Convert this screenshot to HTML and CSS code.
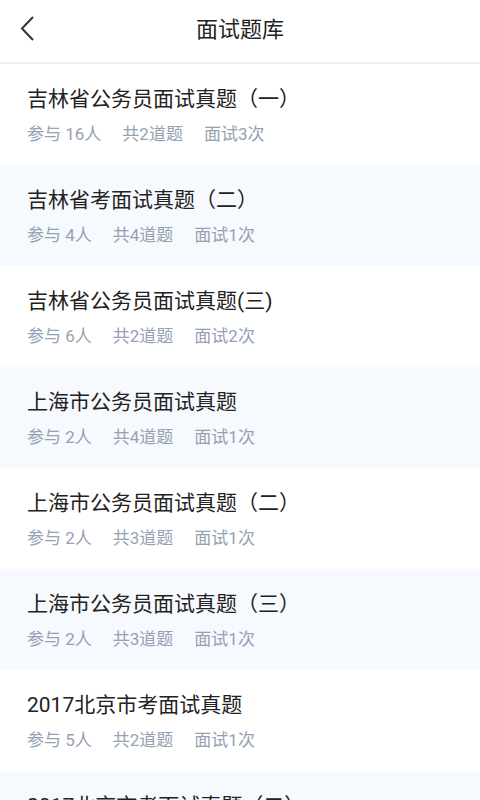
FILE: index.html
```html
<!DOCTYPE html>
<html lang="zh-CN">
<head>
    <meta charset="UTF-8">
    <meta name="viewport" content="width=device-width, initial-scale=1.0">
    <title>面试题库</title>
    <link rel="stylesheet" href="styles.css">
</head>
<body>
    <div class="header">
        <div class="back">
            <svg width="16" height="26" viewBox="0 0 16 26">
                <path d="M13 1 L2 12.5 L13 24" fill="none" stroke="#333" stroke-width="2"/>
            </svg>
        </div>
        <h1>面试题库</h1>
    </div>
    <div class="list">
        <div class="item">
            <div class="title">吉林省公务员面试真题（一）</div>
            <div class="meta"><span>参与 16人</span><span>共2道题</span><span>面试3次</span></div>
        </div>
        <div class="item">
            <div class="title">吉林省考面试真题（二）</div>
            <div class="meta"><span>参与 4人</span><span>共4道题</span><span>面试1次</span></div>
        </div>
        <div class="item">
            <div class="title">吉林省公务员面试真题(三)</div>
            <div class="meta"><span>参与 6人</span><span>共2道题</span><span>面试2次</span></div>
        </div>
        <div class="item">
            <div class="title">上海市公务员面试真题</div>
            <div class="meta"><span>参与 2人</span><span>共4道题</span><span>面试1次</span></div>
        </div>
        <div class="item">
            <div class="title">上海市公务员面试真题（二）</div>
            <div class="meta"><span>参与 2人</span><span>共3道题</span><span>面试1次</span></div>
        </div>
        <div class="item">
            <div class="title">上海市公务员面试真题（三）</div>
            <div class="meta"><span>参与 2人</span><span>共3道题</span><span>面试1次</span></div>
        </div>
        <div class="item">
            <div class="title">2017北京市考面试真题</div>
            <div class="meta"><span>参与 5人</span><span>共2道题</span><span>面试1次</span></div>
        </div>
        <div class="item">
            <div class="title">2017北京市考面试真题（二）</div>
            <div class="meta"><span>参与 3人</span><span>共2道题</span><span>面试1次</span></div>
        </div>
    </div>
</body>
</html>
```

FILE: styles.css
```css
body {
    margin: 0;
    padding: 0;
    font-family: Roboto, "Noto Sans CJK SC", sans-serif;
    background: #fff;
    overflow: hidden;
}
.header {
    height: 64px;
    box-sizing: border-box;
    padding-bottom: 8px;
    display: flex;
    align-items: center;
    justify-content: center;
    position: relative;
    background: #fff;
    border-bottom: 2px solid #f1f1f1;
}
.header h1 {
    margin: 0;
    font-size: 22px;
    font-weight: normal;
    color: #222;
}
.back {
    position: absolute;
    left: 20px;
    top: 16px;
    height: 26px;
}
.item {
    height: 101px;
    box-sizing: border-box;
    padding: 21px 27px 0;
}
.item:nth-child(even) {
    background: #f6f9fd;
}
.title {
    font-size: 21px;
    line-height: 29px;
    color: #222;
}
.meta {
    margin-top: 9px;
    display: flex;
    gap: 21px;
    font-size: 17px;
    line-height: 23px;
    color: #95a1b4;
}
```
